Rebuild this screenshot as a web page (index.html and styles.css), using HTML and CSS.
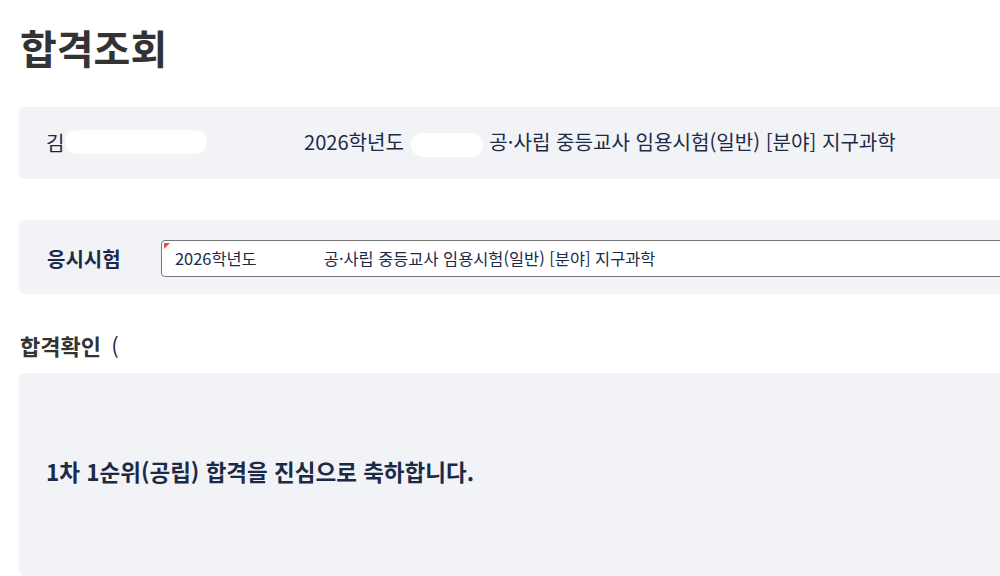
FILE: index.html
```html
<!DOCTYPE html>
<html lang="ko">
<head>
    <meta charset="utf-8">
    <title>합격조회</title>
    <link rel="stylesheet" href="styles.css">
</head>
<body>

<div class="page">
    <h1 class="page-title">합격조회</h1>

    <div class="info-box">
        <div class="info-name">김<span class="masked masked-name"></span></div>
        <div class="info-exam">2026학년도 <span class="masked masked-office"></span> 공·사립 중등교사 임용시험(일반) [분야] 지구과학</div>
    </div>

    <div class="exam-box">
        <label class="exam-label">응시시험</label>
        <div class="exam-select">
            <span class="required-mark"></span>
            2026학년도 <span class="gap"></span> 공·사립 중등교사 임용시험(일반) [분야] 지구과학
        </div>
    </div>

    <h2 class="section-title">합격확인 <span class="paren">(</span></h2>

    <div class="result-box">
        <p class="result-text">1차 1순위(공립) 합격을 진심으로 축하합니다.</p>
    </div>
</div>

</body>
</html>
```

FILE: styles.css
```css
:root {
    --box-bg: #f2f3f7;
    --navy: #1c2a48;
    --title: #333333;
}

body {
    margin: 0;
    padding: 0;
    background: #fff;
    font-family: "Noto Sans CJK KR", "Noto Sans", sans-serif;
    overflow: hidden;
}

.page {
    width: 1200px;
    padding-left: 19px;
}

.page-title {
    margin: 20px 0 33px 1px;
    font-size: 40px;
    line-height: 54px;
    font-weight: 700;
    color: var(--title);
}

.info-box {
    display: flex;
    align-items: center;
    height: 70px;
    padding-bottom: 2px;
    padding-left: 27px;
    background: var(--box-bg);
    border-radius: 6px;
    font-size: 20.1px;
    color: var(--navy);
}

.info-name {
    width: 258px;
    display: flex;
    align-items: center;
}

.masked {
    display: inline-block;
    height: 24px;
    background: #fff;
    border-radius: 12px;
    vertical-align: middle;
}

.masked-name {
    width: 142px;
}

.masked-office {
    width: 72px;
    margin: 0 1px;
}

.exam-box {
    display: flex;
    align-items: center;
    margin-top: 41px;
    padding: 20px 0 17px 28px;
    background: var(--box-bg);
    border-radius: 6px;
}

.exam-label {
    width: 114px;
    font-size: 20px;
    font-weight: 700;
    color: var(--navy);
}

.exam-select {
    position: relative;
    flex: 1;
    height: 35px;
    line-height: 35px;
    padding-left: 13px;
    background: #fff;
    border: 1px solid #767676;
    border-radius: 4px;
    font-size: 16.4px;
    color: var(--navy);
}

.required-mark {
    position: absolute;
    top: 2px;
    left: 2px;
    width: 0;
    height: 0;
    border-top: 6px solid #e84c3d;
    border-right: 6px solid transparent;
}

.gap {
    display: inline-block;
    width: 58px;
}

.section-title {
    margin: 35px 0 12px 1px;
    font-size: 22px;
    line-height: 32px;
    font-weight: 700;
    color: var(--title);
}

.paren {
    margin-left: 4px;
    font-weight: 400;
    color: var(--navy);
}

.result-box {
    display: flex;
    align-items: center;
    height: 196px;
    padding-bottom: 7px;
    padding-left: 27px;
    background: var(--box-bg);
    border-radius: 6px;
}

.result-text {
    margin: 0;
    font-size: 22.5px;
    font-weight: 700;
    color: var(--navy);
}
```
